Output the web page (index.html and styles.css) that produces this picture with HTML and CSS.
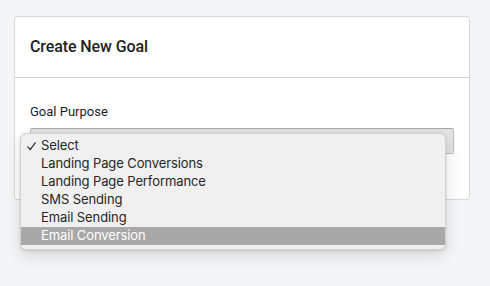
FILE: index.html
```html
<!DOCTYPE html>
<html lang="en">
  <head>
    <meta charset="UTF-8" />
    <title>Create New Goal</title>
    <link rel="stylesheet" href="styles.css">
  </head>
  <body>
    <div class="page">
      <div class="card">
        <h2 class="card-title">Create New Goal</h2>

        <div class="card-body">
          <label class="field-label">Goal Purpose</label>
          <div class="select-box"></div>
        </div>
      </div>

      <!-- open native-looking dropdown, drawn over the card -->
      <ul class="menu">
        <li class="menu-item">
          <svg class="check" width="9" height="9" viewBox="0 0 9 9">
            <path d="M0.8 4.8 L3.2 7.6 L8.2 0.8" fill="none" stroke="#2a2a2a" stroke-width="1.2" stroke-linecap="round" stroke-linejoin="round" />
          </svg>
          Select
        </li>
        <li class="menu-item">Landing Page Conversions</li>
        <li class="menu-item">Landing Page Performance</li>
        <li class="menu-item">SMS Sending</li>
        <li class="menu-item">Email Sending</li>
        <li class="menu-item active">Email Conversion</li>
      </ul>
    </div>
  </body>
</html>
```

FILE: styles.css
```css
* {
  margin: 0;
  padding: 0;
  box-sizing: border-box;
}

body {
  background: #f4f5f6;
  font-family: Roboto, "Liberation Sans", sans-serif;
  color: #1e1e1e;
}

.page {
  position: relative;
  height: 286px;
  padding: 16px 20px 0 14px;
}

.card {
  background: #fff;
  border: 1px solid #d6d7d9;
  border-radius: 3px;
  width: 456px;
  height: 184px;
}

.card-title {
  font-size: 16px;
  font-weight: 500;
  padding: 20px 15px 0;
  height: 61px;
  border-bottom: 1px solid #cfd0d2;
  letter-spacing: -0.1px;
}

.card-body {
  padding: 26px 15px 0;
}

.field-label {
  display: block;
  font-size: 13px;
  margin-bottom: 9px;
}

.select-box {
  height: 26px;
  background: #e3e3e3;
  border: 1px solid #bdbdbd;
  border-top-color: #a9a9a9;
  border-radius: 2px;
}

.menu {
  position: absolute;
  z-index: 10;
  top: 133px;
  left: 20px;
  width: 426px;
  list-style: none;
  background: #f0f0f0;
  border: 1px solid #d2d2d2;
  border-radius: 6px;
  padding: 3px 0 4px;
  box-shadow: 0 6px 16px rgba(0, 0, 0, 0.12), 0 1px 3px rgba(0, 0, 0, 0.12);
  font-family: Inter, "Liberation Sans", sans-serif;
  font-size: 13px;
  letter-spacing: -0.1px;
  color: #262626;
}

.menu-item {
  height: 18px;
  line-height: 17px;
  padding-left: 20px;
  position: relative;
}

.check {
  position: absolute;
  left: 6px;
  top: 5px;
}

.menu-item.active {
  background: #a8a8a8;
  color: #fff;
}
```
